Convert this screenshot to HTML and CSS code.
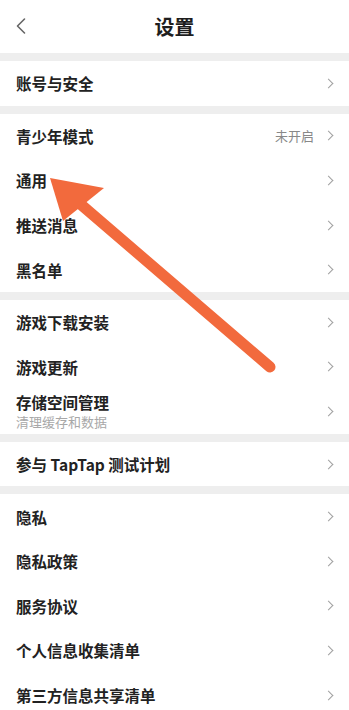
FILE: index.html
```html
<!DOCTYPE html>
<html lang="zh-CN">
<head>
<meta charset="utf-8">
<title>设置</title>
<link rel="stylesheet" href="styles.css">
</head>
<body>
<div class="page">
  <header class="topbar">
    <svg class="back" width="12" height="18" viewBox="0 0 12 18"><path d="M9.5 2 L2.5 9 L9.5 16" fill="none" stroke="#666" stroke-width="1.6" stroke-linecap="round" stroke-linejoin="round"/></svg>
    <h1 class="title">设置</h1>
  </header>

  <div class="sep"></div>
  <section class="group">
    <div class="row"><span class="label">账号与安全</span><span class="chev"></span></div>
  </section>

  <div class="sep"></div>
  <section class="group">
    <div class="row"><span class="label">青少年模式</span><span class="value">未开启</span><span class="chev"></span></div>
    <div class="row"><span class="label">通用</span><span class="chev"></span></div>
    <div class="row"><span class="label">推送消息</span><span class="chev"></span></div>
    <div class="row"><span class="label">黑名单</span><span class="chev"></span></div>
  </section>

  <div class="sep"></div>
  <section class="group">
    <div class="row"><span class="label">游戏下载安装</span><span class="chev"></span></div>
    <div class="row"><span class="label">游戏更新</span><span class="chev"></span></div>
    <div class="row">
      <div class="stack"><span class="label">存储空间管理</span><span class="sub">清理缓存和数据</span></div>
      <span class="chev"></span>
    </div>
  </section>

  <div class="sep"></div>
  <section class="group">
    <div class="row"><span class="label">参与 TapTap 测试计划</span><span class="chev"></span></div>
  </section>

  <div class="sep"></div>
  <section class="group">
    <div class="row"><span class="label">隐私</span><span class="chev"></span></div>
    <div class="row"><span class="label">隐私政策</span><span class="chev"></span></div>
    <div class="row"><span class="label">服务协议</span><span class="chev"></span></div>
    <div class="row"><span class="label">个人信息收集清单</span><span class="chev"></span></div>
    <div class="row"><span class="label">第三方信息共享清单</span><span class="chev"></span></div>
  </section>

  <svg class="arrow" width="349" height="710" viewBox="0 0 349 710">
    <line x1="270" y1="367" x2="78" y2="202" stroke="#F26A3D" stroke-width="11" stroke-linecap="round"/>
    <polygon points="50,178 104,188 63,221" fill="#F26A3D"/>
  </svg>
</div>
</body>
</html>
```

FILE: styles.css
```css
* { box-sizing: border-box; }
html, body { margin: 0; padding: 0; background: #fff; }
body {
  font-family: "Noto Sans CJK SC", "Noto Sans", sans-serif;
  color: #222;
}
.page {
  position: relative;
  width: 349px;
  height: 710px;
  overflow: hidden;
  background: #fff;
}
.topbar {
  height: 53px;
  display: flex;
  align-items: center;
  justify-content: center;
  position: relative;
}
.back {
  position: absolute;
  left: 15px;
  top: 17px;
}
.title {
  margin: 0;
  font-size: 20px;
  font-weight: 700;
  color: #1e1e1e;
  line-height: 1;
}
.sep {
  height: 8px;
  background: #eeeeee;
}
.group {
  display: flex;
  flex-direction: column;
}
.row {
  height: 44.6px;
  display: flex;
  align-items: center;
  padding: 0 16px;
}
.label {
  font-size: 15.5px;
  font-weight: 700;
  color: #222;
  line-height: 20px;
  flex: 1;
}
.stack {
  flex: 1;
  display: flex;
  flex-direction: column;
  gap: 1px;
}
.sub {
  font-size: 13px;
  color: #a8a8a8;
  line-height: 18px;
}
.value {
  font-size: 13px;
  color: #888;
  margin-right: 11px;
}
.chev {
  width: 7px;
  height: 7px;
  border-top: 1.4px solid #a0a0a0;
  border-right: 1.4px solid #a0a0a0;
  transform: rotate(45deg);
  margin-right: 1px;
}
.arrow {
  position: absolute;
  left: 0;
  top: 0;
  pointer-events: none;
}
```
